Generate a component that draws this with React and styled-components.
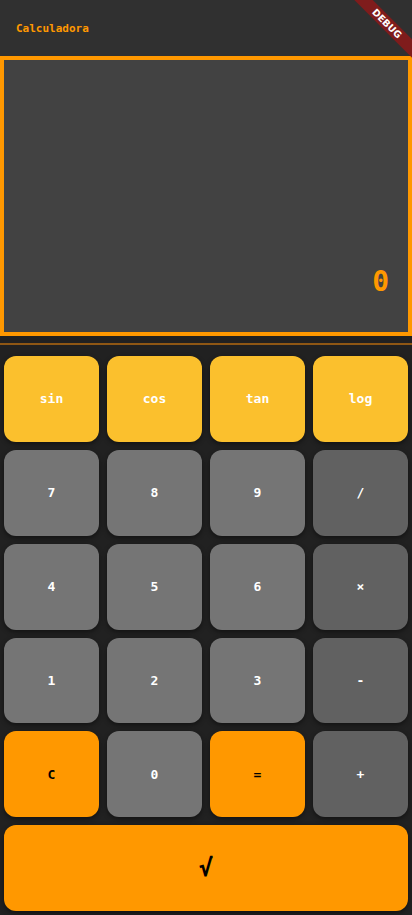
import styled, { createGlobalStyle } from "styled-components"

const Global = createGlobalStyle`
  html, body {
    margin: 0;
    padding: 0;
    background: #212121;
    overflow: hidden;
  }
  * { box-sizing: border-box; }
`

const Screen = styled.div`
  position: relative;
  height: 100vh;
  display: flex;
  flex-direction: column;
  background: #212121;
  overflow: hidden;
  font-family: "DejaVu Sans Mono", "Liberation Mono", monospace;
`

const AppBar = styled.header`
  height: 56px;
  flex: none;
  display: flex;
  align-items: center;
  padding-left: 16px;
  background: #303030;
`

const Title = styled.h1`
  margin: 0;
  font-size: 11px;
  font-weight: bold;
  color: #ff9800;
  letter-spacing: 0;
`

const Display = styled.section`
  height: 280px;
  flex: none;
  border: 4px solid #ff9800;
  background: #424242;
  display: flex;
  flex-direction: column;
  justify-content: flex-end;
  align-items: flex-end;
  padding: 0 19px 36px 0;
`

const Result = styled.span`
  font-size: 28px;
  font-weight: bold;
  line-height: 28px;
  color: #ff9800;
`

const Divider = styled.div`
  height: 16px;
  flex: none;
  display: flex;
  align-items: center;
  &::before {
    content: "";
    display: block;
    width: 100%;
    height: 2px;
    background: #8f5714;
  }
`

const Keypad = styled.div`
  flex: 1;
  display: grid;
  grid-template-columns: repeat(4, 1fr);
  grid-auto-rows: 1fr;
  gap: 8px;
  padding: 4px;
`

const tones = {
  fn: { bg: "#fbc02d", fg: "#ffffff" },
  num: { bg: "#757575", fg: "#ffffff" },
  op: { bg: "#616161", fg: "#ffffff" },
  accent: { bg: "#ff9800", fg: "#000000" },
}

const Key = styled.button`
  border: none;
  border-radius: 12px;
  background: ${(p) => tones[p.$tone].bg};
  color: ${(p) => tones[p.$tone].fg};
  grid-column: ${(p) => (p.$wide ? "1 / -1" : "auto")};
  font-family: inherit;
  font-size: ${(p) => (p.$wide ? "24px" : "13px")};
  font-weight: bold;
  box-shadow: 0 2px 5px rgba(0, 0, 0, 0.45);
  display: flex;
  align-items: center;
  justify-content: center;
  padding: 0;
  cursor: pointer;
`

const Banner = styled.div`
  position: absolute;
  top: 17px;
  right: -27px;
  width: 104px;
  height: 13px;
  transform: rotate(45deg);
  background: #7f1c1c;
  color: #ffffff;
  font-family: "DejaVu Sans", sans-serif;
  font-size: 9.5px;
  font-weight: bold;
  line-height: 13px;
  text-align: center;
`

const keys = [
  ["sin", "fn"], ["cos", "fn"], ["tan", "fn"], ["log", "fn"],
  ["7", "num"], ["8", "num"], ["9", "num"], ["/", "op"],
  ["4", "num"], ["5", "num"], ["6", "num"], ["×", "op"],
  ["1", "num"], ["2", "num"], ["3", "num"], ["-", "op"],
  ["C", "accent"], ["0", "num"], ["=", "accent"], ["+", "op"],
]

export default function App() {
  return (
    <>
      <Global />
      <Screen>
        <AppBar>
          <Title>Calculadora</Title>
        </AppBar>
        <Display>
          <Result>0</Result>
        </Display>
        <Divider />
        <Keypad>
          {keys.map(([label, tone]) => (
            <Key key={label} $tone={tone}>{label}</Key>
          ))}
          <Key $tone="accent" $wide>√</Key>
        </Keypad>
        <Banner>DEBUG</Banner>
      </Screen>
    </>
  )
}
